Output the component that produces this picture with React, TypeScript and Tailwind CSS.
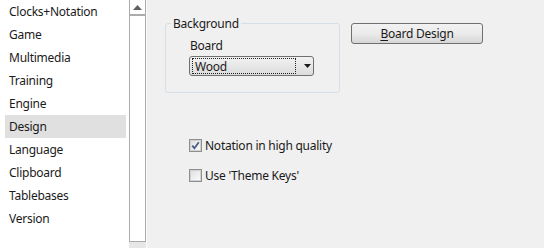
import React from "react";

const items = [
  "Clocks+Notation",
  "Game",
  "Multimedia",
  "Training",
  "Engine",
  "Design",
  "Language",
  "Clipboard",
  "Tablebases",
  "Version",
];

function Checkbox({ checked, label }: { checked: boolean; label: string }) {
  return (
    <div className="flex h-[16px] items-center">
      <div className="flex h-[13px] w-[13px] items-center justify-center border border-[#8f8f8f] bg-[#f4f4f4]">
        <div className="flex h-[11px] w-[11px] items-center justify-center border border-[#d2d2d2] bg-gradient-to-br from-[#e0e0e0] to-[#fbfbfb]">
          {checked && (
            <svg width="9" height="9" viewBox="0 0 9 9">
              <path d="M1.2 4.6 L3.4 7.2 L7.8 1.2" fill="none" stroke="#4a5f87" strokeWidth="1.8" />
            </svg>
          )}
        </div>
      </div>
      <span className="ml-[3px] pt-[1px]">{label}</span>
    </div>
  );
}

export default function App() {
  return (
    <div
      className="flex h-[248px] w-[544px] overflow-hidden bg-[#f0f0f0] text-[12px] leading-[16px] tracking-[-0.25px] text-[#1a1a1a]"
      style={{ fontFamily: '"Segoe UI", "Noto Sans", sans-serif' }}
    >
      {/* left list */}
      <div className="flex h-full w-[129px] flex-col bg-white">
        {items.map((it) => (
          <div
            key={it}
            className={`ml-[5px] flex h-[23px] w-[121px] items-center pl-[4px] pt-[1px] ${
              it === "Design" ? "bg-[#e0e0e0]" : ""
            }`}
          >
            {it}
          </div>
        ))}
      </div>
      {/* scrollbar */}
      <div className="flex h-full w-[17px] flex-col bg-white">
        <div className="flex h-[242px] flex-col border-x border-[#ababab]">
          <div className="flex h-[16px] items-center justify-center border-b-2 border-[#ababab]">
            <svg width="9" height="5" viewBox="0 0 9 5">
              <path d="M0 5 L4.5 0 L9 5 Z" fill="#606060" />
            </svg>
          </div>
          <div className="flex-1 border-b border-[#ababab] bg-white" />
        </div>
        <div className="flex-1 bg-[#e6e6e6]" />
      </div>
      <div className="h-full w-px bg-[#fafafa]" />
      {/* right panel */}
      <div className="flex flex-1 flex-col pl-[18px] pt-[15px]">
        <div className="flex items-start">
          <fieldset className="m-0 h-[78px] w-[175px] rounded-[3px] border border-[#d5dfe5] p-0">
            <legend className="ml-[5px] px-[2px] pt-[1px] leading-[16px]">Background</legend>
            <div className="pl-[23px] pt-[5px]">
              <div className="pl-[1px] pt-[1px]">Board</div>
              <div className="mt-[2px] flex h-[20px] w-[125px] items-center rounded-[3px] border border-[#707070] bg-gradient-to-b from-[#f2f2f2] to-[#dcdcdc] p-[2px]">
                <div className="flex h-[16px] w-[104px] items-center border border-dotted border-[#222] pl-[2px] pt-[1px]">
                  Wood
                </div>
                <svg className="ml-[8px]" width="7" height="4" viewBox="0 0 7 4">
                  <path d="M0 0 L7 0 L3.5 4 Z" fill="#1a1a1a" />
                </svg>
              </div>
            </div>
          </fieldset>
          <button className="ml-[11px] mt-[8px] flex h-[21px] w-[132px] items-center justify-center rounded-[3px] border border-[#707070] bg-gradient-to-b from-[#f2f2f2] via-[#ebebeb] to-[#d6d6d6] pt-[1px]">
            <span>
              <span className="underline underline-offset-2">B</span>oard Design
            </span>
          </button>
        </div>
        <div className="ml-[24px] mt-[44px] flex flex-col gap-[14px]">
          <Checkbox checked label="Notation in high quality" />
          <Checkbox checked={false} label="Use 'Theme Keys'" />
        </div>
      </div>
    </div>
  );
}
